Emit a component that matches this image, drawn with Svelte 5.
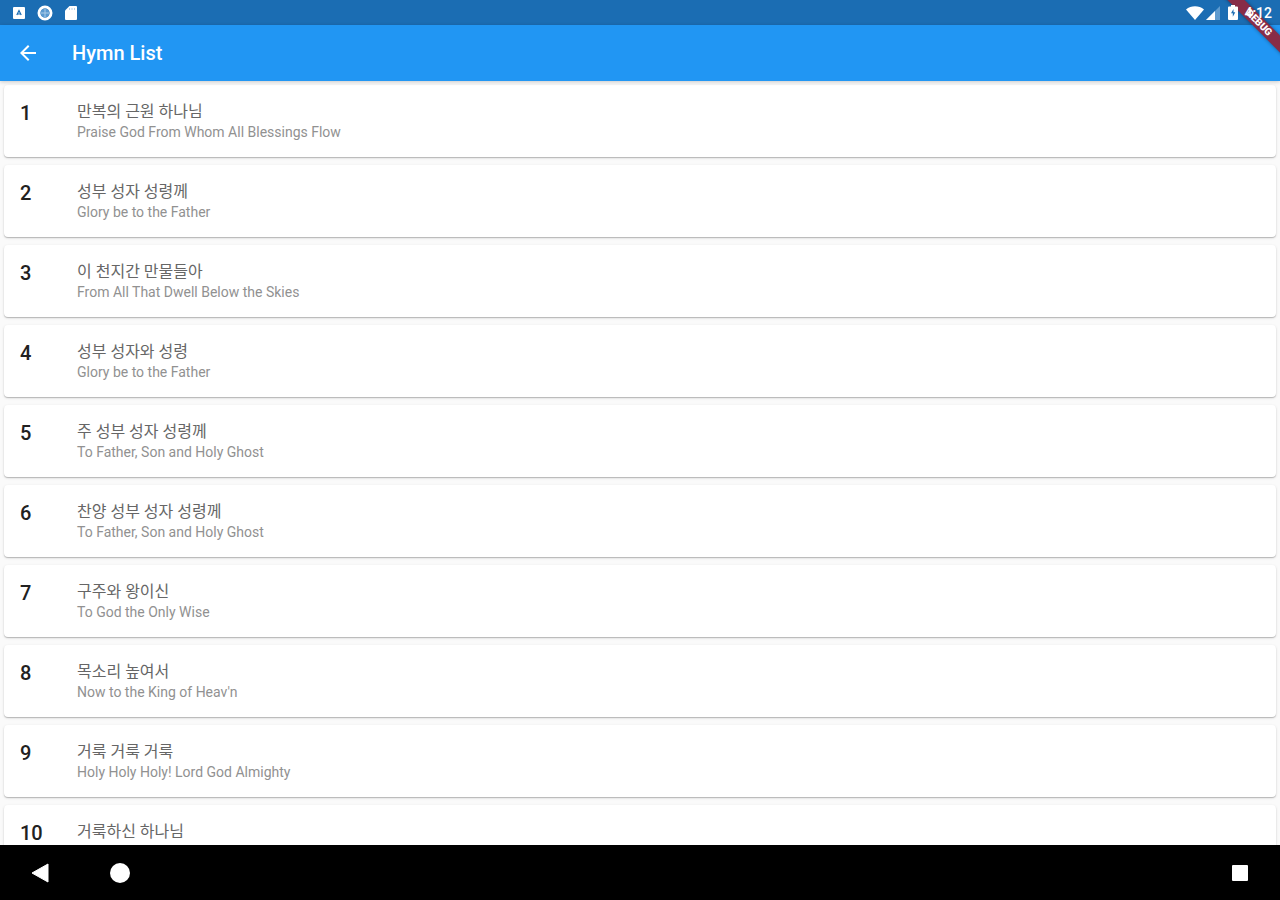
<script>
  const hymns = [
    { ko: '만복의 근원 하나님', en: 'Praise God From Whom All Blessings Flow' },
    { ko: '성부 성자 성령께', en: 'Glory be to the Father' },
    { ko: '이 천지간 만물들아', en: 'From All That Dwell Below the Skies' },
    { ko: '성부 성자와 성령', en: 'Glory be to the Father' },
    { ko: '주 성부 성자 성령께', en: 'To Father, Son and Holy Ghost' },
    { ko: '찬양 성부 성자 성령께', en: 'To Father, Son and Holy Ghost' },
    { ko: '구주와 왕이신', en: 'To God the Only Wise' },
    { ko: '목소리 높여서', en: "Now to the King of Heav'n" },
    { ko: '거룩 거룩 거룩', en: 'Holy Holy Holy! Lord God Almighty' },
    { ko: '거룩하신 하나님', en: '' }
  ];
</script>

<div class="screen">
  <div class="banner" aria-hidden="true"><span>DEBUG</span></div>

  <div class="status">
    <div class="group left">
      <svg width="14" height="14" viewBox="0 0 14 14" aria-hidden="true">
        <rect x="1" y="1" width="12" height="12" rx="1" fill="#fff" />
        <path d="M4.800 9 7 4.500 9.200 9M5.500 8h3" fill="none" stroke="#1b6db3" stroke-width="1.200" />
      </svg>
      <svg width="16" height="16" viewBox="0 0 16 16" aria-hidden="true">
        <circle cx="8" cy="8" r="6" fill="none" stroke="#fff" stroke-width="3" />
        <circle cx="8" cy="8" r="4.500" fill="#5b9ad0" />
        <path d="M8 4v8M4 8h8" stroke="#a9cbe8" stroke-width="1" />
      </svg>
      <svg width="14" height="16" viewBox="0 0 14 16" aria-hidden="true">
        <path d="M5.500 1H12a1 1 0 0 1 1 1v12a1 1 0 0 1-1 1H2a1 1 0 0 1-1-1V5.500Z" fill="#fff" />
        <path d="M5.500 3v2M8 3v2M10.500 3v2" stroke="#b9d3ea" />
      </svg>
    </div>
    <div class="group right">
      <svg width="18" height="14" viewBox="0 0 18 14" aria-hidden="true">
        <path d="M0 3.500C5-.8 13-.8 18 3.500L9 14Z" fill="#fff" />
      </svg>
      <svg width="14" height="14" viewBox="0 0 14 14" aria-hidden="true">
        <path d="M14 0v14H0Z" fill="#5f9bcf" />
        <path d="M9 5v9H0Z" fill="#fff" />
      </svg>
      <svg class="battery" width="10" height="15" viewBox="0 0 10 15" aria-hidden="true">
        <path d="M3 0h4v1.500h2a1 1 0 0 1 1 1V14a1 1 0 0 1-1 1H1a1 1 0 0 1-1-1V2.500a1 1 0 0 1 1-1h2Z" fill="#fff" />
        <path d="M5.500 4 3 8.300h1.800v3.500L7.300 7.300H5.500Z" fill="#1b6db3" />
      </svg>
      <time>4:12</time>
    </div>
  </div>

  <header>
    <button aria-label="Back">
      <svg width="24" height="24" viewBox="0 0 24 24" aria-hidden="true">
        <path d="M20 11H7.830l5.590-5.590L12 4l-8 8 8 8 1.410-1.410L7.830 13H20v-2z" fill="#fff" />
      </svg>
    </button>
    <h1>Hymn List</h1>
  </header>

  <main>
    <ol>
      {#each hymns as hymn, i}
        <li>
          <span class="number">{i + 1}</span>
          <div class="names">
            <span class="ko" lang="ko">{hymn.ko}</span>
            <span class="en">{hymn.en}</span>
          </div>
        </li>
      {/each}
    </ol>
  </main>

  <nav>
    <button aria-label="System back">
      <svg width="20" height="20" viewBox="0 0 20 20" aria-hidden="true">
        <path d="M2 10 18 1v18Z" fill="#fff" stroke="#fff" stroke-linejoin="round" />
      </svg>
    </button>
    <button aria-label="Home">
      <svg width="20" height="20" viewBox="0 0 20 20" aria-hidden="true">
        <circle cx="10" cy="10" r="10" fill="#fff" />
      </svg>
    </button>
    <button class="recent" aria-label="Recent apps">
      <svg width="20" height="20" viewBox="0 0 20 20" aria-hidden="true">
        <rect x="2" y="2" width="16" height="16" rx="1" fill="#fff" />
      </svg>
    </button>
  </nav>
</div>

<style>
  :global(body) {
    margin: 0;
  }

  .screen {
    position: relative;
    display: flex;
    flex-direction: column;
    height: 100vh;
    overflow: hidden;
    background: #fafafa;
    font-family: Roboto, 'Noto Sans CJK KR', sans-serif;
  }

  button {
    display: grid;
    place-items: center;
    padding: 0;
    border: 0;
    background: none;
  }

  svg {
    display: block;
    flex: none;
  }

  .status {
    display: flex;
    flex: none;
    justify-content: space-between;
    align-items: center;
    height: 25px;
    padding: 0 8px 0 12px;
    background: #1b6db3;
  }

  .group {
    position: relative;
    z-index: 3;
    display: flex;
    align-items: center;
  }

  .left {
    gap: 11px;
  }

  .right {
    gap: 2px;
  }

  .battery {
    margin: 0 4px 0 6px;
  }

  time {
    color: #fff;
    font-size: 14px;
    font-weight: 500;
    line-height: 24px;
  }

  header {
    position: relative;
    z-index: 1;
    display: flex;
    flex: none;
    align-items: center;
    height: 56px;
    background: #2196f3;
    box-shadow: 0 1px 4px rgba(0, 0, 0, 0.2);
  }

  header button {
    width: 56px;
    height: 56px;
  }

  h1 {
    margin: 0 0 0 16px;
    color: #fff;
    font-size: 20px;
    font-weight: 500;
    line-height: 24px;
  }

  .banner {
    position: absolute;
    z-index: 2;
    top: 0;
    right: 0;
    width: 60px;
    height: 60px;
    overflow: hidden;
  }

  .banner span {
    position: absolute;
    top: 17px;
    left: -9px;
    width: 96px;
    height: 12px;
    transform: rotate(45deg);
    background: #882c47;
    box-shadow: 0 0 4px rgba(0, 0, 0, 0.4);
    color: #fff;
    font-size: 10px;
    font-weight: 900;
    line-height: 12px;
    text-align: center;
  }

  main {
    flex: 1;
    min-height: 0;
    overflow: hidden;
  }

  ol {
    display: grid;
    gap: 8px;
    margin: 0;
    padding: 4px;
    list-style: none;
  }

  li {
    display: flex;
    box-sizing: border-box;
    height: 72px;
    padding: 16px;
    border-radius: 4px;
    background: #fff;
    box-shadow:
      0 1px 1px rgba(0, 0, 0, 0.2),
      0 1px 3px rgba(0, 0, 0, 0.12);
  }

  .number {
    width: 57px;
    color: #212121;
    font-size: 20px;
    font-weight: 500;
    line-height: 24px;
  }

  .names {
    display: grid;
    align-content: start;
  }

  .ko {
    color: #666;
    font-size: 16px;
    line-height: 22px;
  }

  .en {
    color: #919191;
    font-size: 14px;
    line-height: 18px;
  }

  nav {
    display: flex;
    flex: none;
    height: 55px;
    background: #000;
  }

  nav button {
    width: 80px;
    height: 55px;
  }

  .recent {
    margin-left: auto;
  }
</style>
